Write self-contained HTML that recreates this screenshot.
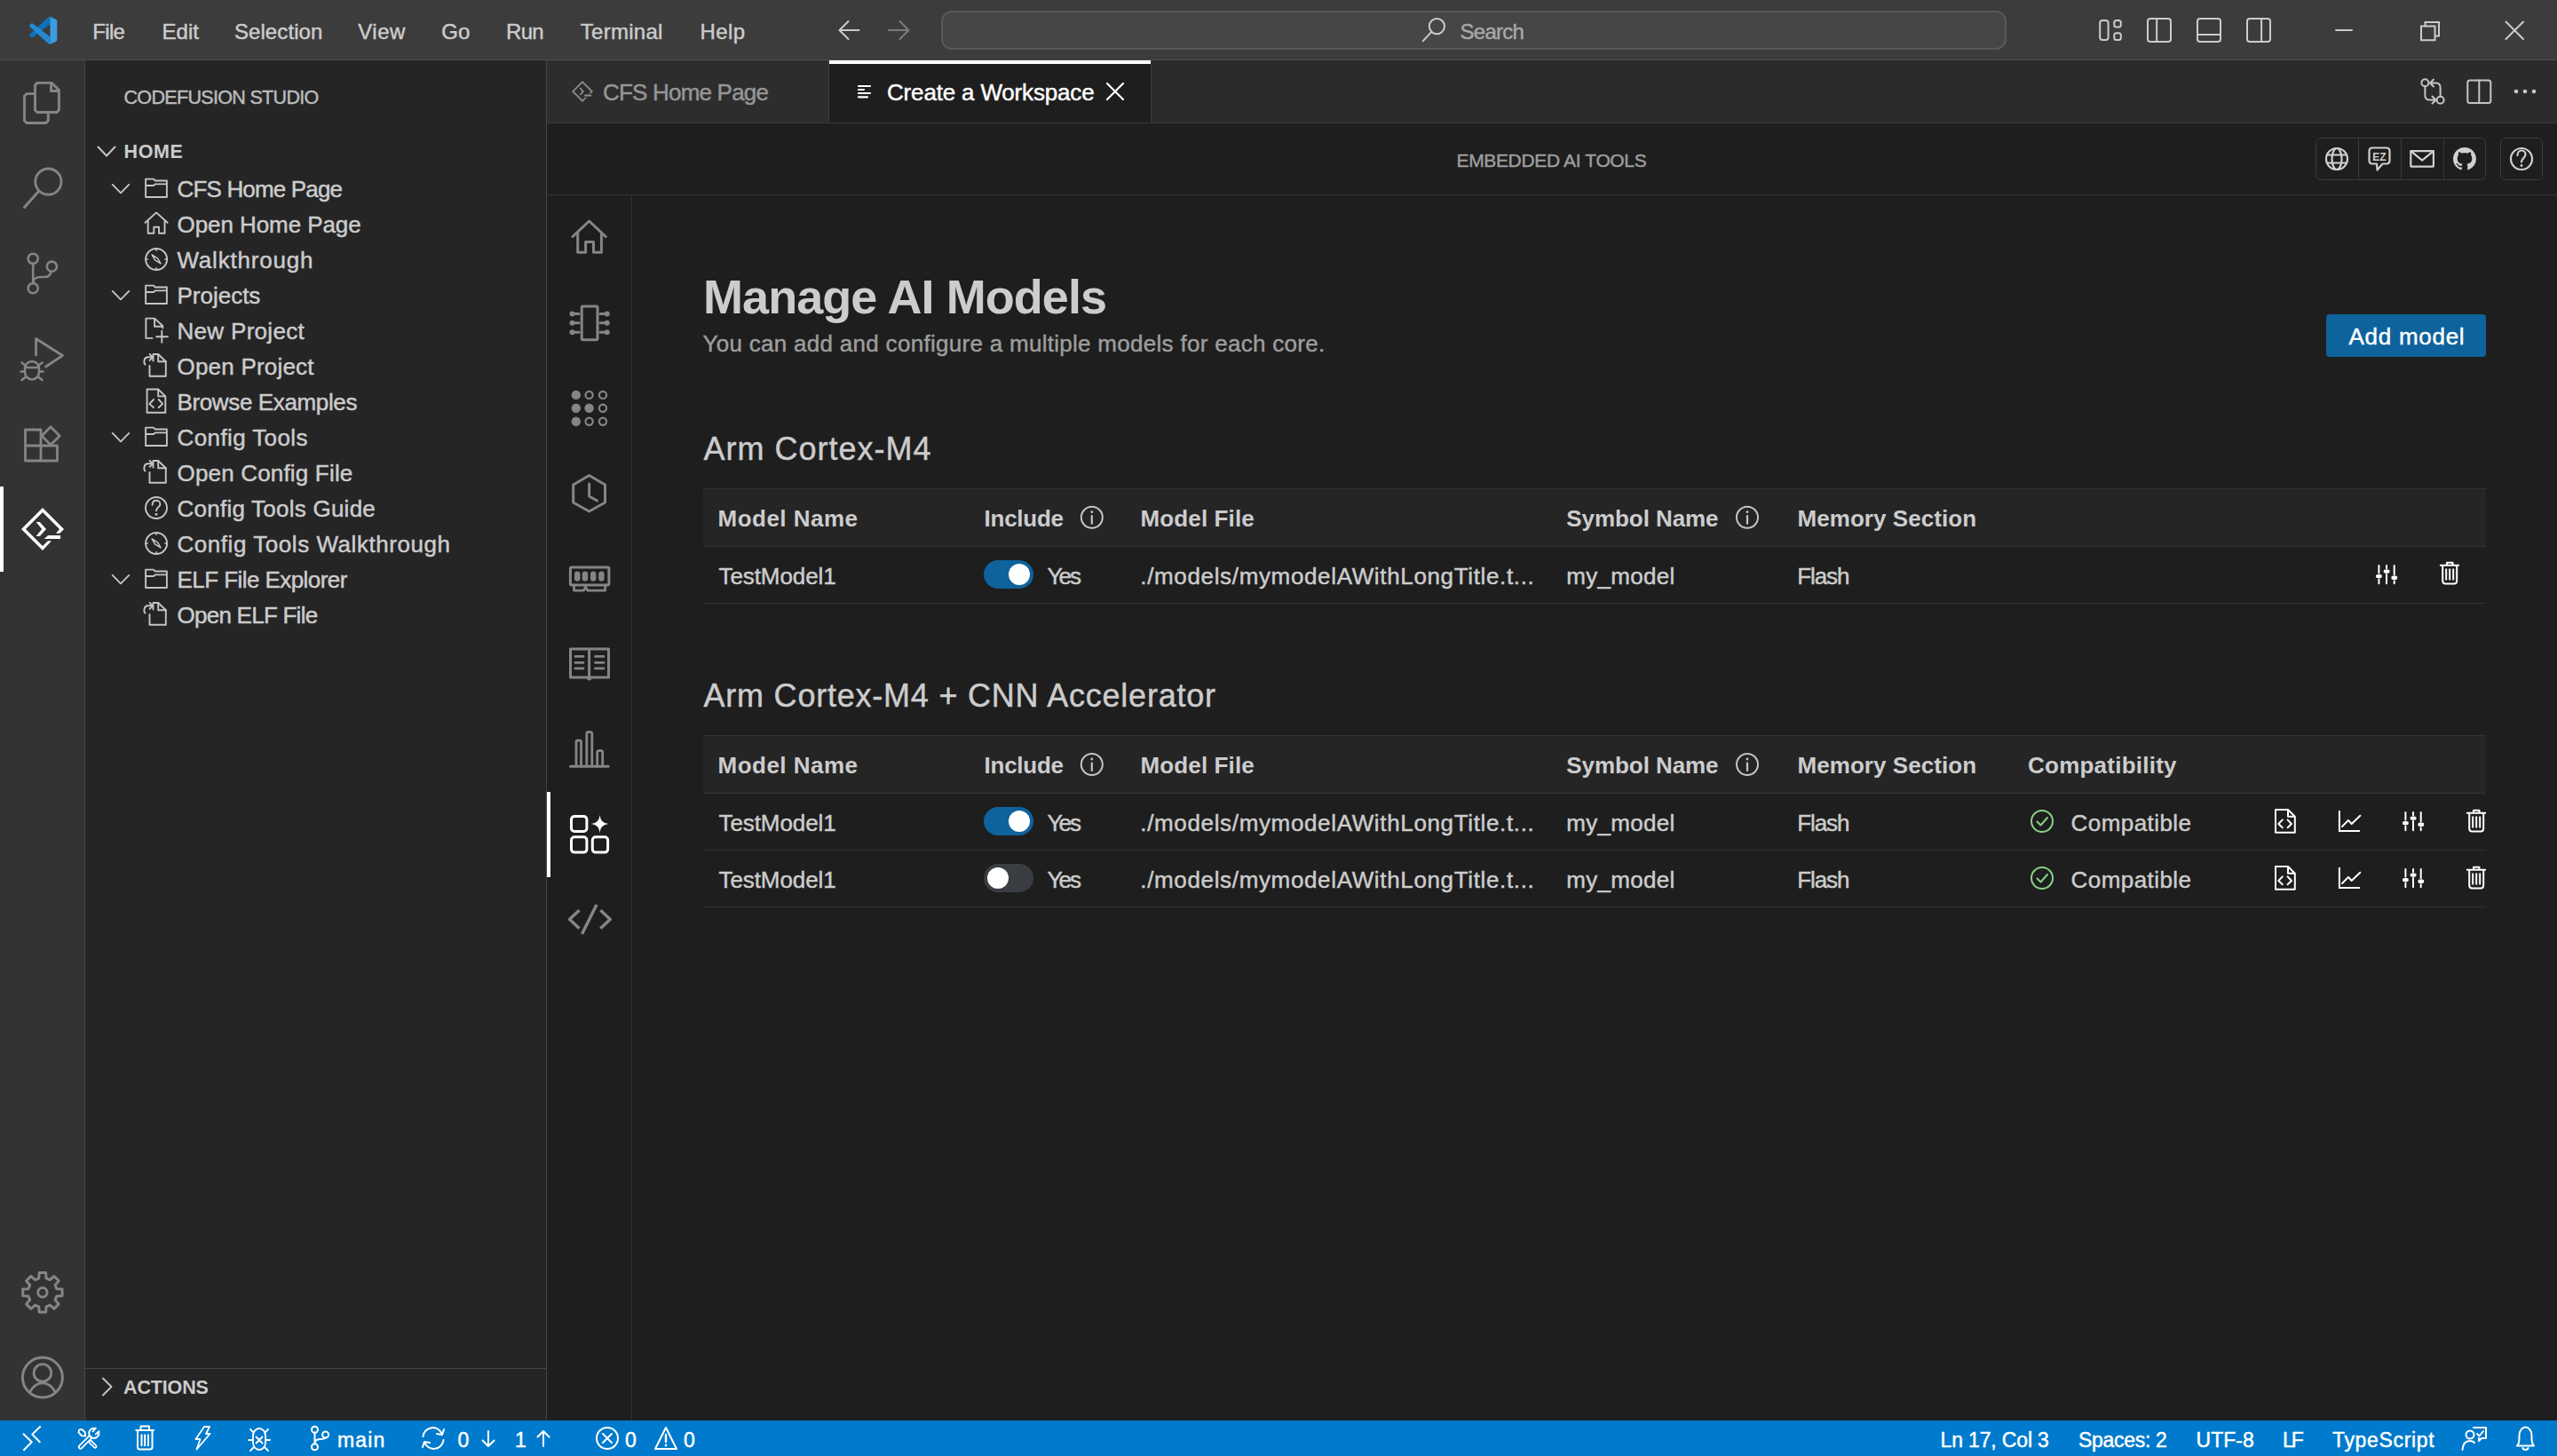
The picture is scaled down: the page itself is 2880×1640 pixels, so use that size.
<!DOCTYPE html>
<html><head><meta charset="utf-8"><title>Manage AI Models</title>
<style>
html,body{margin:0;padding:0;width:2880px;height:1640px;overflow:hidden;background:#1e1e1e;}
body{position:relative;font-family:"Liberation Sans", sans-serif;}
.t{position:absolute;white-space:pre;line-height:1;-webkit-text-stroke:0.45px currentColor;}
svg.ov{position:absolute;left:0;top:0;}
</style></head><body>
<div style="position:absolute;left:0px;top:0px;width:2880px;height:67px;background:#3c3c3c;"></div>
<div style="position:absolute;left:0px;top:67px;width:2880px;height:1px;background:#4e4e4e;"></div>
<div style="position:absolute;left:0px;top:68px;width:95px;height:1532px;background:#333333;"></div>
<div style="position:absolute;left:95px;top:68px;width:1px;height:1532px;background:#474747;"></div>
<div style="position:absolute;left:96px;top:68px;width:519px;height:1532px;background:#252526;"></div>
<div style="position:absolute;left:615px;top:68px;width:1px;height:1532px;background:#444444;"></div>
<div style="position:absolute;left:616px;top:68px;width:2264px;height:70px;background:#2b2b2b;"></div>
<div style="position:absolute;left:616px;top:68px;width:317px;height:70px;background:#2d2d2d;"></div>
<div style="position:absolute;left:933px;top:68px;width:1px;height:70px;background:#3a3a3a;"></div>
<div style="position:absolute;left:934px;top:68px;width:362px;height:70px;background:#1e1e1e;"></div>
<div style="position:absolute;left:934px;top:68px;width:362px;height:4px;background:#ffffff;"></div>
<div style="position:absolute;left:1296px;top:68px;width:1px;height:70px;background:#3a3a3a;"></div>
<div style="position:absolute;left:616px;top:138px;width:2264px;height:1px;background:#3a3a3a;"></div>
<div style="position:absolute;left:616px;top:139px;width:2264px;height:1461px;background:#1e1e1e;"></div>
<div style="position:absolute;left:616px;top:219px;width:2264px;height:1px;background:#333333;"></div>
<div style="position:absolute;left:711px;top:220px;width:1px;height:1380px;background:#333333;"></div>
<div style="position:absolute;left:0px;top:1600px;width:2880px;height:40px;background:#007acc;"></div>
<div style="position:absolute;left:0px;top:548px;width:4px;height:96px;background:#ffffff;"></div>
<div style="position:absolute;left:616px;top:892px;width:4px;height:96px;background:#ffffff;"></div>
<div class="t" style="left:104.3px;top:23.7px;font-size:24px;color:#cccccc;font-weight:400;letter-spacing:-0.68px;">File</div>
<div class="t" style="left:182.5px;top:23.7px;font-size:24px;color:#cccccc;font-weight:400;letter-spacing:0.03px;">Edit</div>
<div class="t" style="left:263.9px;top:23.7px;font-size:24px;color:#cccccc;font-weight:400;letter-spacing:0.09px;">Selection</div>
<div class="t" style="left:403.2px;top:23.7px;font-size:24px;color:#cccccc;font-weight:400;letter-spacing:0.52px;">View</div>
<div class="t" style="left:497.3px;top:23.7px;font-size:24px;color:#cccccc;font-weight:400;letter-spacing:-0.08px;">Go</div>
<div class="t" style="left:570.0px;top:23.7px;font-size:24px;color:#cccccc;font-weight:400;letter-spacing:-0.70px;">Run</div>
<div class="t" style="left:653.8px;top:23.7px;font-size:24px;color:#cccccc;font-weight:400;letter-spacing:0.28px;">Terminal</div>
<div class="t" style="left:788.4px;top:23.7px;font-size:24px;color:#cccccc;font-weight:400;letter-spacing:0.46px;">Help</div>
<div style="position:absolute;left:1060px;top:12px;width:1200px;height:44px;background:#464646;border:2px solid #585858;box-sizing:border-box;border-radius:12px;"></div>
<div class="t" style="left:1644.5px;top:23.7px;font-size:24px;color:#a8a8a8;font-weight:400;letter-spacing:-0.72px;">Search</div>
<div class="t" style="left:139.5px;top:99.8px;font-size:21.5px;color:#bbbbbb;font-weight:400;letter-spacing:-0.67px;">CODEFUSION STUDIO</div>
<div class="t" style="left:139.5px;top:160.8px;font-size:21.5px;color:#cccccc;font-weight:700;letter-spacing:0.60px;-webkit-text-stroke:0;">HOME</div>
<div class="t" style="left:199.5px;top:199.5px;font-size:26px;color:#cccccc;font-weight:400;letter-spacing:-0.83px;">CFS Home Page</div>
<div class="t" style="left:199.5px;top:239.5px;font-size:26px;color:#cccccc;font-weight:400;letter-spacing:-0.07px;">Open Home Page</div>
<div class="t" style="left:199.5px;top:279.5px;font-size:26px;color:#cccccc;font-weight:400;letter-spacing:0.79px;">Walkthrough</div>
<div class="t" style="left:199.5px;top:319.5px;font-size:26px;color:#cccccc;font-weight:400;letter-spacing:-0.01px;">Projects</div>
<div class="t" style="left:199.5px;top:359.5px;font-size:26px;color:#cccccc;font-weight:400;letter-spacing:0.31px;">New Project</div>
<div class="t" style="left:199.5px;top:399.5px;font-size:26px;color:#cccccc;font-weight:400;letter-spacing:0.21px;">Open Project</div>
<div class="t" style="left:199.5px;top:439.5px;font-size:26px;color:#cccccc;font-weight:400;letter-spacing:-0.37px;">Browse Examples</div>
<div class="t" style="left:199.5px;top:479.5px;font-size:26px;color:#cccccc;font-weight:400;letter-spacing:0.40px;">Config Tools</div>
<div class="t" style="left:199.5px;top:519.5px;font-size:26px;color:#cccccc;font-weight:400;letter-spacing:0.18px;">Open Config File</div>
<div class="t" style="left:199.5px;top:559.5px;font-size:26px;color:#cccccc;font-weight:400;letter-spacing:0.24px;">Config Tools Guide</div>
<div class="t" style="left:199.5px;top:599.5px;font-size:26px;color:#cccccc;font-weight:400;letter-spacing:0.55px;">Config Tools Walkthrough</div>
<div class="t" style="left:199.5px;top:639.5px;font-size:26px;color:#cccccc;font-weight:400;letter-spacing:-0.56px;">ELF File Explorer</div>
<div class="t" style="left:199.5px;top:679.5px;font-size:26px;color:#cccccc;font-weight:400;letter-spacing:-0.75px;">Open ELF File</div>
<div style="position:absolute;left:96px;top:1541px;width:519px;height:1px;background:#444444;"></div>
<div class="t" style="left:139px;top:1552.8px;font-size:21.5px;color:#cccccc;font-weight:700;letter-spacing:-0.14px;-webkit-text-stroke:0;">ACTIONS</div>
<div class="t" style="left:679px;top:91.0px;font-size:26px;color:#969696;font-weight:400;letter-spacing:-0.80px;">CFS Home Page</div>
<div class="t" style="left:999px;top:91.0px;font-size:26px;color:#ffffff;font-weight:400;letter-spacing:-0.17px;">Create a Workspace</div>
<div class="t" style="left:1640.5px;top:170.2px;font-size:21px;color:#9d9d9d;font-weight:400;letter-spacing:-0.35px;">EMBEDDED AI TOOLS</div>
<div style="position:absolute;left:2608px;top:155px;width:192px;height:48px;background:transparent;border:1.5px solid #3a3a3a;border-radius:6px;box-sizing:border-box;"></div>
<div style="position:absolute;left:2656px;top:156px;width:1px;height:46px;background:#3a3a3a;"></div>
<div style="position:absolute;left:2704px;top:156px;width:1px;height:46px;background:#3a3a3a;"></div>
<div style="position:absolute;left:2752px;top:156px;width:1px;height:46px;background:#3a3a3a;"></div>
<div style="position:absolute;left:2816px;top:155px;width:48px;height:48px;background:transparent;border:1.5px solid #3a3a3a;border-radius:6px;box-sizing:border-box;"></div>
<div class="t" style="left:792px;top:306.8px;font-size:54px;color:#cccccc;font-weight:700;letter-spacing:-0.94px;-webkit-text-stroke:0;">Manage AI Models</div>
<div class="t" style="left:791.5px;top:374.0px;font-size:26px;color:#9d9d9d;font-weight:400;letter-spacing:0.29px;">You can add and configure a multiple models for each core.</div>
<div style="position:absolute;left:2620px;top:354px;width:180px;height:48px;background:#0e639c;border-radius:4px;"></div>
<div class="t" style="left:2645.5px;top:366.0px;font-size:26px;color:#ffffff;font-weight:400;letter-spacing:0.73px;">Add model</div>
<div class="t" style="left:792.5px;top:487.5px;font-size:36px;color:#cccccc;font-weight:400;letter-spacing:0.99px;">Arm Cortex-M4</div>
<div style="position:absolute;left:792px;top:550px;width:2008px;height:1px;background:#333333;"></div>
<div style="position:absolute;left:792px;top:551px;width:2008px;height:64px;background:#252526;"></div>
<div style="position:absolute;left:792px;top:615px;width:2008px;height:1px;background:#333333;"></div>
<div class="t" style="left:808.5px;top:571.0px;font-size:26px;color:#cccccc;font-weight:700;letter-spacing:0.49px;-webkit-text-stroke:0;">Model Name</div>
<div class="t" style="left:1108.5px;top:571.0px;font-size:26px;color:#cccccc;font-weight:700;letter-spacing:-0.24px;-webkit-text-stroke:0;">Include</div>
<div class="t" style="left:1284.5px;top:571.0px;font-size:26px;color:#cccccc;font-weight:700;letter-spacing:0.13px;-webkit-text-stroke:0;">Model File</div>
<div class="t" style="left:1764.3px;top:571.0px;font-size:26px;color:#cccccc;font-weight:700;letter-spacing:-0.07px;-webkit-text-stroke:0;">Symbol Name</div>
<div class="t" style="left:2024.5px;top:571.0px;font-size:26px;color:#cccccc;font-weight:700;letter-spacing:0.06px;-webkit-text-stroke:0;">Memory Section</div>
<div style="position:absolute;left:792px;top:679px;width:2008px;height:1px;background:#333333;"></div>
<div class="t" style="left:809.5px;top:635.5px;font-size:26px;color:#cccccc;font-weight:400;letter-spacing:-0.08px;">TestModel1</div>
<div class="t" style="left:1179.5px;top:635.5px;font-size:26px;color:#cccccc;font-weight:400;letter-spacing:-1.93px;">Yes</div>
<div class="t" style="left:1284.3px;top:635.5px;font-size:26px;color:#cccccc;font-weight:400;letter-spacing:0.65px;">./models/mymodelAWithLongTitle.t...</div>
<div class="t" style="left:1764.3px;top:635.5px;font-size:26px;color:#cccccc;font-weight:400;letter-spacing:0.29px;">my_model</div>
<div class="t" style="left:2024.3px;top:635.5px;font-size:26px;color:#cccccc;font-weight:400;letter-spacing:-1.10px;">Flash</div>
<div style="position:absolute;left:1108px;top:631px;width:56px;height:32px;background:#0e639c;border-radius:16px;"></div>
<div style="position:absolute;left:1136px;top:635px;width:24px;height:24px;background:#ffffff;border-radius:50%;"></div>
<div class="t" style="left:792.5px;top:765.8px;font-size:36px;color:#cccccc;font-weight:400;letter-spacing:0.78px;">Arm Cortex-M4 + CNN Accelerator</div>
<div style="position:absolute;left:792px;top:828px;width:2008px;height:1px;background:#333333;"></div>
<div style="position:absolute;left:792px;top:829px;width:2008px;height:64px;background:#252526;"></div>
<div style="position:absolute;left:792px;top:893px;width:2008px;height:1px;background:#333333;"></div>
<div class="t" style="left:808.5px;top:849.0px;font-size:26px;color:#cccccc;font-weight:700;letter-spacing:0.49px;-webkit-text-stroke:0;">Model Name</div>
<div class="t" style="left:1108.5px;top:849.0px;font-size:26px;color:#cccccc;font-weight:700;letter-spacing:-0.24px;-webkit-text-stroke:0;">Include</div>
<div class="t" style="left:1284.5px;top:849.0px;font-size:26px;color:#cccccc;font-weight:700;letter-spacing:0.13px;-webkit-text-stroke:0;">Model File</div>
<div class="t" style="left:1764.3px;top:849.0px;font-size:26px;color:#cccccc;font-weight:700;letter-spacing:-0.07px;-webkit-text-stroke:0;">Symbol Name</div>
<div class="t" style="left:2024.5px;top:849.0px;font-size:26px;color:#cccccc;font-weight:700;letter-spacing:0.06px;-webkit-text-stroke:0;">Memory Section</div>
<div class="t" style="left:2284px;top:849.0px;font-size:26px;color:#cccccc;font-weight:700;letter-spacing:0.24px;-webkit-text-stroke:0;">Compatibility</div>
<div style="position:absolute;left:792px;top:957px;width:2008px;height:1px;background:#333333;"></div>
<div class="t" style="left:809.5px;top:913.5px;font-size:26px;color:#cccccc;font-weight:400;letter-spacing:-0.08px;">TestModel1</div>
<div class="t" style="left:1179.5px;top:913.5px;font-size:26px;color:#cccccc;font-weight:400;letter-spacing:-1.93px;">Yes</div>
<div class="t" style="left:1284.3px;top:913.5px;font-size:26px;color:#cccccc;font-weight:400;letter-spacing:0.65px;">./models/mymodelAWithLongTitle.t...</div>
<div class="t" style="left:1764.3px;top:913.5px;font-size:26px;color:#cccccc;font-weight:400;letter-spacing:0.29px;">my_model</div>
<div class="t" style="left:2024.3px;top:913.5px;font-size:26px;color:#cccccc;font-weight:400;letter-spacing:-1.10px;">Flash</div>
<div class="t" style="left:2332.5px;top:913.5px;font-size:26px;color:#cccccc;font-weight:400;letter-spacing:0.45px;">Compatible</div>
<div style="position:absolute;left:1108px;top:909px;width:56px;height:32px;background:#0e639c;border-radius:16px;"></div>
<div style="position:absolute;left:1136px;top:913px;width:24px;height:24px;background:#ffffff;border-radius:50%;"></div>
<div style="position:absolute;left:792px;top:1021px;width:2008px;height:1px;background:#333333;"></div>
<div class="t" style="left:809.5px;top:977.5px;font-size:26px;color:#cccccc;font-weight:400;letter-spacing:-0.08px;">TestModel1</div>
<div class="t" style="left:1179.5px;top:977.5px;font-size:26px;color:#cccccc;font-weight:400;letter-spacing:-1.93px;">Yes</div>
<div class="t" style="left:1284.3px;top:977.5px;font-size:26px;color:#cccccc;font-weight:400;letter-spacing:0.65px;">./models/mymodelAWithLongTitle.t...</div>
<div class="t" style="left:1764.3px;top:977.5px;font-size:26px;color:#cccccc;font-weight:400;letter-spacing:0.29px;">my_model</div>
<div class="t" style="left:2024.3px;top:977.5px;font-size:26px;color:#cccccc;font-weight:400;letter-spacing:-1.10px;">Flash</div>
<div class="t" style="left:2332.5px;top:977.5px;font-size:26px;color:#cccccc;font-weight:400;letter-spacing:0.45px;">Compatible</div>
<div style="position:absolute;left:1108px;top:973px;width:56px;height:32px;background:#3a3d41;border-radius:16px;"></div>
<div style="position:absolute;left:1112px;top:977px;width:24px;height:24px;background:#ffffff;border-radius:50%;"></div>
<div class="t" style="left:380px;top:1610.5px;font-size:23px;color:#ffffff;font-weight:400;letter-spacing:1.17px;">main</div>
<div class="t" style="left:515.5px;top:1610.5px;font-size:23px;color:#ffffff;font-weight:400;letter-spacing:0.00px;">0</div>
<div class="t" style="left:580px;top:1610.5px;font-size:23px;color:#ffffff;font-weight:400;letter-spacing:0.00px;">1</div>
<div class="t" style="left:704px;top:1610.5px;font-size:23px;color:#ffffff;font-weight:400;letter-spacing:0.00px;">0</div>
<div class="t" style="left:770px;top:1610.5px;font-size:23px;color:#ffffff;font-weight:400;letter-spacing:0.00px;">0</div>
<div class="t" style="left:2185.5px;top:1610.5px;font-size:23px;color:#ffffff;font-weight:400;letter-spacing:-0.15px;">Ln 17, Col 3</div>
<div class="t" style="left:2341px;top:1610.5px;font-size:23px;color:#ffffff;font-weight:400;letter-spacing:-0.30px;">Spaces: 2</div>
<div class="t" style="left:2473.5px;top:1610.5px;font-size:23px;color:#ffffff;font-weight:400;letter-spacing:0.05px;">UTF-8</div>
<div class="t" style="left:2571px;top:1610.5px;font-size:23px;color:#ffffff;font-weight:400;letter-spacing:-3.06px;">LF</div>
<div class="t" style="left:2627px;top:1610.5px;font-size:23px;color:#ffffff;font-weight:400;letter-spacing:0.66px;">TypeScript</div>
<svg class="ov" width="2880" height="1640" viewBox="0 0 2880 1640" fill="none" stroke-linecap="round" stroke-linejoin="round">
<g transform="translate(33,18.7) scale(0.313)"><path d="M68.77,2.08 L69.5,1.45 L75,0.5 L75,27.3 L45.11,50 L29.36,61.96 L12.19,74.99 C10.6,76.2 8.35,76.1 6.87,74.75 L1.36,69.75 C-0.45,68.1 -0.45,65.24 1.36,63.58 L16.25,50 L29.36,38.04 Z" fill="#0e72ba"/><path d="M12.19,25.01 C10.6,23.8 8.35,23.9 6.87,25.25 L1.36,30.25 C-0.45,31.9 -0.45,34.76 1.36,36.42 L16.25,50 L29.36,61.96 L68.77,97.92 C69.4,98.54 70.12,99.01 70.91,99.32 L75,99.5 L75,72.7 L45.11,50 L29.36,38.04 Z" fill="#248ad2"/><path d="M75,0.2 L96.46,10.78 C98.62,11.82 100,14.01 100,16.41 V83.59 C100,85.99 98.62,88.18 96.46,89.22 L75.87,99.13 C75.5,99.3 75.2,99.45 75,99.5 Z" fill="#3b9de0"/></g>
<path d="M945.5,34 H967.5 M945.5,34 L955.5,24 M945.5,34 L955.5,44" stroke="#cccccc" stroke-width="2" />
<path d="M1001,34 H1023.5 M1023.5,34 L1013.5,24 M1023.5,34 L1013.5,44" stroke="#7a7a7a" stroke-width="2" />
<circle cx="1618.4" cy="29.6" r="8.6" stroke="#cccccc" stroke-width="2"/>
<path d="M1612.3,35.8 L1602.8,46.2" stroke="#cccccc" stroke-width="2" />
<rect x="2365.2" y="23" width="9.4" height="22" rx="3" stroke="#cccccc" stroke-width="2"/>
<rect x="2381.3" y="23" width="7.5" height="7.5" rx="2.5" stroke="#cccccc" stroke-width="2"/>
<rect x="2381.3" y="37.2" width="7.5" height="7.8" rx="2.5" stroke="#cccccc" stroke-width="2"/>
<rect x="2419" y="21" width="26" height="26" rx="3" stroke="#cccccc" stroke-width="2"/>
<path d="M2429.2,21 V47" stroke="#cccccc" stroke-width="2" />
<rect x="2475" y="21" width="26" height="26" rx="3" stroke="#cccccc" stroke-width="2"/>
<path d="M2475,39 H2501" stroke="#cccccc" stroke-width="2" />
<rect x="2531" y="21" width="26" height="26" rx="3" stroke="#cccccc" stroke-width="2"/>
<path d="M2547.1,21 V47" stroke="#cccccc" stroke-width="2" />
<path d="M2631,34 H2649" stroke="#cccccc" stroke-width="2" />
<path d="M2727,29.6 H2742.5 V45.2 H2727 Z M2731.5,29.6 V25 H2747 V40.5 H2742.5" stroke="#cccccc" stroke-width="2" stroke-linejoin="miter" stroke-linecap="butt"/>
<path d="M2822.5,24.5 L2842,44 M2842,24.5 L2822.5,44" stroke="#cccccc" stroke-width="2" />
<path d="M39.5,105.6 H30 L27.5,108.1 V136 L30,138.5 H51.8 L54.3,136 V126.5" stroke="#858585" stroke-width="2.9" stroke-linejoin="miter"/>
<path d="M39.5,96 L42,93.4 H58.3 L66.4,101.4 V124 L63.9,126.5 H42 L39.5,124 Z M57.6,93.4 V102.5 H66.4" stroke="#858585" stroke-width="2.9" stroke-linejoin="miter"/>
<circle cx="54.4" cy="204.6" r="14.6" stroke="#858585" stroke-width="2.8"/>
<path d="M43.5,215.5 L27.5,233.5" stroke="#858585" stroke-width="3" />
<circle cx="37.2" cy="291.3" r="5.6" stroke="#858585" stroke-width="2.6"/>
<circle cx="37.2" cy="324.7" r="5.6" stroke="#858585" stroke-width="2.6"/>
<circle cx="58.4" cy="300.2" r="5.6" stroke="#858585" stroke-width="2.6"/>
<path d="M37.2,297 V319 M37.5,318 C38,313 41,312 46,312 H51 C55,312 57,309 57.5,305.5" stroke="#858585" stroke-width="2.6" />
<path d="M40.6,400 V381.5 L70.5,400.5 L51.5,413" stroke="#858585" stroke-width="2.8" />
<path d="M28,415 A8,8 0 0 1 44,415 V419 A8,8.5 0 0 1 28,419 Z M28,414 H44 M23.5,418.5 H28 M44,418.5 H48.5 M24.5,408.5 L29,412 M47.5,408.5 L43,412 M24.5,428 L29,424.5 M47.5,428 L43,424.5" stroke="#858585" stroke-width="2.6" />
<path d="M28.5,484 H46 V519 H28.5 Z M28.5,502 H64.5 V519 H46 M46,502" stroke="#858585" stroke-width="2.8" />
<path d="M57.1,480.8 L67.2,490.9 L57.1,501 L47,490.9 Z" stroke="#858585" stroke-width="2.8" />
<path transform="translate(16,564)" d="M51.4,36.7 L56,32 L32,8 L8,32 L32,56 L42,45.3 L38,45.3 L32,51 L13,32 L32,13 L51,32 L47,36.7 Z M24.6,24 L28.8,24 L36,32 L28.8,40 L24.6,40 L31.2,32 Z M33.8,42.9 L38.2,39.1 L52.1,39.1 L52.1,42.9 Z" fill="#ffffff"/>
<path d="M63.87,1451.67 L70.09,1452.09 L70.09,1459.51 L63.87,1459.93 L62.12,1464.17 L66.22,1468.87 L60.97,1474.12 L56.27,1470.02 L52.03,1471.77 L51.61,1477.99 L44.19,1477.99 L43.77,1471.77 L39.53,1470.02 L34.83,1474.12 L29.58,1468.87 L33.68,1464.17 L31.93,1459.93 L25.71,1459.51 L25.71,1452.09 L31.93,1451.67 L33.68,1447.43 L29.58,1442.73 L34.83,1437.48 L39.53,1441.58 L43.77,1439.83 L44.19,1433.61 L51.61,1433.61 L52.03,1439.83 L56.27,1441.58 L60.97,1437.48 L66.22,1442.73 L62.12,1447.43 Z" stroke="#858585" stroke-width="3" />
<circle cx="47.9" cy="1455.8" r="5.2" stroke="#858585" stroke-width="3"/>
<circle cx="47.9" cy="1551.6" r="22.5" stroke="#858585" stroke-width="3"/>
<circle cx="47.9" cy="1546.4" r="9.8" stroke="#858585" stroke-width="2.8"/>
<path d="M33.8,1567.5 C37.5,1561 42.5,1557.9 47.9,1557.9 C53.3,1557.9 58.3,1561 62,1567.5" stroke="#858585" stroke-width="2.8" />
<path d="M110.5,165.5 L120,175.5 L129.5,165.5" stroke="#c5c5c5" stroke-width="2" />
<path d="M116,1552.5 L125.5,1562 L116,1571.5" stroke="#c5c5c5" stroke-width="1.9" />
<path d="M126.7,207.9 L136,217.3 L145.3,207.9" stroke="#c5c5c5" stroke-width="1.9" />
<path d="M164.1,222 V201.6 H172.9 L174.8,203.5 H187.9 V222 Z M164.1,209 H172.9 L174.8,207.4 H187.9" stroke="#c5c5c5" stroke-width="1.9" />
<path d="M163.6,250.8 L176.1,239.4 L188.6,250.8 M166.7,248 V262.7 H173.3 V255.8 H179 V262.7 H185.5 V248" stroke="#c5c5c5" stroke-width="1.9" />
<circle cx="176.1" cy="292" r="12" stroke="#c5c5c5" stroke-width="1.9"/>
<path d="M171.1,287 L177.6,291.1 L181,296.9 L174.5,292.9 Z" stroke="#c5c5c5" stroke-width="1.5" />
<path d="M176.1,280 V282.2 M176.1,304 V301.8 M164.1,292 H166.3 M188.1,292 H185.9" stroke="#c5c5c5" stroke-width="1.5" />
<path d="M126.7,327.9 L136,337.3 L145.3,327.9" stroke="#c5c5c5" stroke-width="1.9" />
<path d="M164.1,342 V321.6 H172.9 L174.8,323.5 H187.9 V342 Z M164.1,329 H172.9 L174.8,327.4 H187.9" stroke="#c5c5c5" stroke-width="1.9" />
<path d="M171.6,380.9 H164.4 V358.6 H174.1 L183.2,367 V369.5 M174.1,358.6 V367.7 H183.2" stroke="#c5c5c5" stroke-width="1.9" />
<path d="M176.1,379.2 H188.9 M182.3,372.6 V385.8" stroke="#c5c5c5" stroke-width="1.9" />
<path d="M172.5,406.5 V399 H178.2 L186.8,407.2 V423.7 H168.5 V412" stroke="#c5c5c5" stroke-width="1.9" />
<path d="M178.2,399 V407.2 H186.8" stroke="#c5c5c5" stroke-width="1.9" />
<path d="M163.4,410.5 C161.5,408.5 162,402.3 166.5,402.3 H172 M168.6,398.8 L172.1,402.3 L168.6,405.8" stroke="#c5c5c5" stroke-width="1.9" />
<path d="M165.6,464.8 V438.5 H178.2 L186.3,446.4 V464.8 Z M178.2,438.5 V446.4 H186.3" stroke="#c5c5c5" stroke-width="1.9" />
<path d="M173,450 L168.3,454.9 L173,459 M178.7,450 L183.2,454.9 L178.7,459" stroke="#c5c5c5" stroke-width="1.9" />
<path d="M126.7,487.9 L136,497.3 L145.3,487.9" stroke="#c5c5c5" stroke-width="1.9" />
<path d="M164.1,502 V481.6 H172.9 L174.8,483.5 H187.9 V502 Z M164.1,489 H172.9 L174.8,487.4 H187.9" stroke="#c5c5c5" stroke-width="1.9" />
<path d="M172.5,526.5 V519 H178.2 L186.8,527.2 V543.7 H168.5 V532" stroke="#c5c5c5" stroke-width="1.9" />
<path d="M178.2,519 V527.2 H186.8" stroke="#c5c5c5" stroke-width="1.9" />
<path d="M163.4,530.5 C161.5,528.5 162,522.3 166.5,522.3 H172 M168.6,518.8 L172.1,522.3 L168.6,525.8" stroke="#c5c5c5" stroke-width="1.9" />
<circle cx="176" cy="572" r="12" stroke="#c5c5c5" stroke-width="1.9"/>
<path d="M171.6,568.8 C171.6,565 174,563.8 176,563.8 C178.5,563.8 180.4,565.6 180.4,568 C180.4,571 176,571.5 176,575.2" stroke="#c5c5c5" stroke-width="1.9" />
<circle cx="176" cy="579.3" r="1.4" fill="#c5c5c5" stroke="none"/>
<circle cx="176.1" cy="612" r="12" stroke="#c5c5c5" stroke-width="1.9"/>
<path d="M171.1,607 L177.6,611.1 L181,616.9 L174.5,612.9 Z" stroke="#c5c5c5" stroke-width="1.5" />
<path d="M176.1,600 V602.2 M176.1,624 V621.8 M164.1,612 H166.3 M188.1,612 H185.9" stroke="#c5c5c5" stroke-width="1.5" />
<path d="M126.7,647.9 L136,657.3 L145.3,647.9" stroke="#c5c5c5" stroke-width="1.9" />
<path d="M164.1,662 V641.6 H172.9 L174.8,643.5 H187.9 V662 Z M164.1,649 H172.9 L174.8,647.4 H187.9" stroke="#c5c5c5" stroke-width="1.9" />
<path d="M172.5,686.5 V679 H178.2 L186.8,687.2 V703.7 H168.5 V692" stroke="#c5c5c5" stroke-width="1.9" />
<path d="M178.2,679 V687.2 H186.8" stroke="#c5c5c5" stroke-width="1.9" />
<path d="M163.4,690.5 C161.5,688.5 162,682.3 166.5,682.3 H172 M168.6,678.8 L172.1,682.3 L168.6,685.8" stroke="#c5c5c5" stroke-width="1.9" />
<path transform="translate(640,87) scale(0.5)" d="M51.4,36.7 L56,32 L32,8 L8,32 L32,56 L42,45.3 L38,45.3 L32,51 L13,32 L32,13 L51,32 L47,36.7 Z M24.6,24 L28.8,24 L36,32 L28.8,40 L24.6,40 L31.2,32 Z M33.8,42.9 L38.2,39.1 L52.1,39.1 L52.1,42.9 Z" fill="#8f8f8f"/>
<path d="M967,97 H980 M967,101 H973 M967,105 H980 M967,109.3 H977" stroke="#ffffff" stroke-width="2.2" />
<path d="M1247,94 L1265,112 M1265,94 L1247,112" stroke="#ffffff" stroke-width="2.2" />
<circle cx="2731.4" cy="93.2" r="4" stroke="#c5c5c5" stroke-width="2"/>
<circle cx="2748.6" cy="112.8" r="4" stroke="#c5c5c5" stroke-width="2"/>
<path d="M2731.4,97.2 V107 C2731.4,110 2733,112.5 2736,112.5 H2743 M2739.5,108.5 L2743.5,112.5 L2739.5,116.5" stroke="#c5c5c5" stroke-width="2" />
<path d="M2748.6,108.8 V99 C2748.6,96 2747,93.5 2744,93.5 H2738 M2741,89.5 L2737,93.5 L2741,97.5" stroke="#c5c5c5" stroke-width="2" />
<rect x="2779.3" y="90.5" width="26" height="25.5" rx="2.5" stroke="#c5c5c5" stroke-width="2"/>
<path d="M2792.3,90.5 V116" stroke="#c5c5c5" stroke-width="2" />
<circle cx="2834" cy="103" r="2.3" fill="#c5c5c5" stroke="none"/>
<circle cx="2844" cy="103" r="2.3" fill="#c5c5c5" stroke="none"/>
<circle cx="2854" cy="103" r="2.3" fill="#c5c5c5" stroke="none"/>
<circle cx="2632" cy="179" r="12" stroke="#d0d0d0" stroke-width="2.2"/>
<ellipse cx="2632" cy="179" rx="5.5" ry="12" stroke="#d0d0d0" stroke-width="2.2"/>
<path d="M2621,174.5 H2643 M2621,183.5 H2643" stroke="#d0d0d0" stroke-width="2.2" />
<path d="M2672,166.5 H2688 C2690.5,166.5 2691.5,168 2691.5,170.5 V180.5 C2691.5,183 2690,184.5 2688,184.5 H2683.5 L2677.5,191.5 L2677,184.5 H2672 C2669.5,184.5 2668.5,183 2668.5,180.5 V170.5 C2668.5,168 2670,166.5 2672,166.5 Z" stroke="#d0d0d0" stroke-width="2.2" />
<text x="2680" y="181" font-family="Liberation Sans" font-size="12" font-weight="700" fill="#d0d0d0" stroke="none" text-anchor="middle">EZ</text>
<rect x="2715.3" y="170.1" width="25.6" height="17.5" rx="0.5" stroke="#d0d0d0" stroke-width="2.2"/>
<path d="M2715.3,170.1 L2728.1,180.6 L2740.9,170.1" stroke="#d0d0d0" stroke-width="2.2" />
<g transform="translate(2763,166) scale(1.625)"><path fill="#d0d0d0" d="M8 0C3.58 0 0 3.58 0 8c0 3.54 2.29 6.53 5.47 7.59.4.07.55-.17.55-.38 0-.19-.01-.82-.01-1.49-2.01.37-2.53-.49-2.69-.94-.09-.23-.48-.94-.82-1.13-.28-.15-.68-.52-.01-.53.63-.01 1.08.58 1.23.82.72 1.21 1.87.87 2.33.66.07-.52.28-.87.51-1.07-1.78-.2-3.64-.89-3.64-3.95 0-.87.31-1.59.82-2.15-.08-.2-.36-1.02.08-2.12 0 0 .67-.21 2.2.82.64-.18 1.32-.27 2-.27.68 0 1.36.09 2 .27 1.53-1.04 2.2-.82 2.2-.82.44 1.1.16 1.92.08 2.12.51.56.82 1.27.82 2.15 0 3.07-1.87 3.75-3.65 3.95.29.25.54.73.54 1.48 0 1.07-.01 1.93-.01 2.2 0 .21.15.46.55.38A8.013 8.013 0 0016 8c0-4.42-3.58-8-8-8z"/></g>
<circle cx="2840" cy="179" r="12" stroke="#d0d0d0" stroke-width="2.2"/>
<path d="M2835.5,175 C2835.5,171 2838,169.5 2840,169.5 C2842.5,169.5 2844.5,171.5 2844.5,174 C2844.5,177.5 2840,178.5 2840,182.5" stroke="#d0d0d0" stroke-width="2.2" />
<circle cx="2840" cy="186.5" r="1.4" fill="#d0d0d0" stroke="none"/>
<path d="M645,266.5 L663.6,249 L682.2,266.5 M650.7,262 V284.3 H659.6 V272.4 H668.5 V284.3 H677.4 V262" stroke="#858585" stroke-width="3" />
<rect x="655.2" y="345.1" width="17.8" height="37.6" rx="1.5" stroke="#858585" stroke-width="3"/>
<path d="M646,353.5 H652 M676,353.5 H682" stroke="#858585" stroke-width="3" />
<circle cx="644.5" cy="353.5" r="3" fill="#858585" stroke="none"/>
<circle cx="683.7" cy="353.5" r="3" fill="#858585" stroke="none"/>
<path d="M646,363.8 H652 M676,363.8 H682" stroke="#858585" stroke-width="3" />
<circle cx="644.5" cy="363.8" r="3" fill="#858585" stroke="none"/>
<circle cx="683.7" cy="363.8" r="3" fill="#858585" stroke="none"/>
<path d="M646,374.3 H652 M676,374.3 H682" stroke="#858585" stroke-width="3" />
<circle cx="644.5" cy="374.3" r="3" fill="#858585" stroke="none"/>
<circle cx="683.7" cy="374.3" r="3" fill="#858585" stroke="none"/>
<circle cx="648.8" cy="444.9" r="5.2" fill="#858585" stroke="none"/>
<circle cx="663.6" cy="444.9" r="4.1" stroke="#858585" stroke-width="2.2"/>
<circle cx="679" cy="444.9" r="4.1" stroke="#858585" stroke-width="2.2"/>
<circle cx="648.8" cy="459.7" r="5.2" fill="#858585" stroke="none"/>
<circle cx="663.6" cy="459.7" r="5.2" fill="#858585" stroke="none"/>
<circle cx="679" cy="459.7" r="4.1" stroke="#858585" stroke-width="2.2"/>
<circle cx="648.8" cy="474.7" r="5.2" fill="#858585" stroke="none"/>
<circle cx="663.6" cy="474.7" r="4.1" stroke="#858585" stroke-width="2.2"/>
<circle cx="679" cy="474.7" r="4.1" stroke="#858585" stroke-width="2.2"/>
<path d="M663.6,535.5 L681.5,546 V566 L663.6,576 L645.7,566 V546 Z" stroke="#858585" stroke-width="3" />
<path d="M663.6,545 V559 L672.5,564" stroke="#858585" stroke-width="3" />
<rect x="642.4" y="638.9" width="43.5" height="20" rx="1.5" stroke="#858585" stroke-width="3"/>
<rect x="647.0" y="643.5" width="6.4" height="11.3" rx="3.2" fill="#858585" stroke="none"/>
<rect x="655.8" y="643.5" width="6.4" height="11.3" rx="3.2" fill="#858585" stroke="none"/>
<rect x="665.0" y="643.5" width="6.4" height="11.3" rx="3.2" fill="#858585" stroke="none"/>
<rect x="674.1999999999999" y="643.5" width="6.4" height="11.3" rx="3.2" fill="#858585" stroke="none"/>
<path d="M646.5,659 V665.2 H657.5 L659.5,661 L662,665.2 H681.7 V659" stroke="#858585" stroke-width="2.8" />
<path d="M642.5,731 H663.6 V763 H642.5 Z M663.6,731 H685.5 V763 H663.6" stroke="#858585" stroke-width="3" />
<path d="M648,739.4 H657 M648,746.3 H657 M648,752.9 H657 M670.5,739.4 H680 M670.5,746.3 H680 M670.5,752.9 H680" stroke="#858585" stroke-width="2.8" />
<circle cx="663.6" cy="764" r="2.5" fill="#858585" stroke="none"/>
<path d="M642.6,863.2 H685.1" stroke="#858585" stroke-width="3" />
<path d="M649,863 V835.5 C649,833.5 654.5,833.5 654.5,835.5 V863 M660.8,863 V826 C660.8,824 666.8,824 666.8,826 V863 M672.7,863 V847 C672.7,845 678.7,845 678.7,847 V863" stroke="#858585" stroke-width="2.8" />
<rect x="643.5" y="919.6" width="17.4" height="16.8" rx="3.5" stroke="#ffffff" stroke-width="3"/>
<rect x="643.5" y="942.8" width="17.4" height="17.3" rx="3.5" stroke="#ffffff" stroke-width="3"/>
<rect x="667.3" y="942.8" width="17.3" height="17.3" rx="3.5" stroke="#ffffff" stroke-width="3"/>
<path d="M675.6,918 C676.5,924.5 679,927 685.6,928 C679,929 676.5,931.5 675.6,938 C674.7,931.5 672.2,929 665.6,928 C672.2,927 674.7,924.5 675.6,918 Z" fill="#ffffff" stroke="none" />
<path d="M652.5,1025.3 L641.5,1035.5 L652.5,1045.8 M676.3,1025.3 L687.3,1035.5 L676.3,1045.8 M672,1019 L655.5,1052" stroke="#858585" stroke-width="3.5" stroke-linecap="butt"/>
<circle cx="1229.8" cy="582.7" r="12" stroke="#c5c5c5" stroke-width="2"/>
<path d="M1229.8,581.2 V589.7" stroke="#c5c5c5" stroke-width="2.2" />
<circle cx="1229.8" cy="576.7" r="1.4" fill="#c5c5c5" stroke="none"/>
<circle cx="1968" cy="582.7" r="12" stroke="#c5c5c5" stroke-width="2"/>
<path d="M1968,581.2 V589.7" stroke="#c5c5c5" stroke-width="2.2" />
<circle cx="1968" cy="576.7" r="1.4" fill="#c5c5c5" stroke="none"/>
<circle cx="1229.8" cy="861" r="12" stroke="#c5c5c5" stroke-width="2"/>
<path d="M1229.8,859.5 V868" stroke="#c5c5c5" stroke-width="2.2" />
<circle cx="1229.8" cy="855" r="1.4" fill="#c5c5c5" stroke="none"/>
<circle cx="1968" cy="861" r="12" stroke="#c5c5c5" stroke-width="2"/>
<path d="M1968,859.5 V868" stroke="#c5c5c5" stroke-width="2.2" />
<circle cx="1968" cy="855" r="1.4" fill="#c5c5c5" stroke="none"/>
<path d="M2679.4,637.0 V645.6 M2679.4,652.6 V657.3 M2688.0,637.0 V640.3 M2688.0,647.0 V657.3 M2696.7,637.0 V647.3 M2696.7,654.2 V657.3" stroke="#ffffff" stroke-width="2" />
<rect x="2675.9" y="646.9" width="7" height="4.4" rx="2.2" fill="#ffffff" stroke="none"/>
<rect x="2684.6" y="641.4" width="7" height="4.4" rx="2.2" fill="#ffffff" stroke="none"/>
<rect x="2693.3" y="648.6" width="7" height="4.4" rx="2.2" fill="#ffffff" stroke="none"/>
<path d="M2748.8,636.8 H2769.2 M2756.0,636.8 V633.7 H2762.5 V636.8 M2751.2,637.0 V654 C2751.2,656.5 2752.5,657.5 2754.5,657.5 H2764 C2766.0,657.5 2767.2,656.5 2767.2,654.0 V637" stroke="#ffffff" stroke-width="2" />
<path d="M2755.2,640.5 V653.5 M2759.2,640.5 V653.5 M2763.2,640.5 V653.5" stroke="#ffffff" stroke-width="2" stroke-linecap="butt"/>
<path d="M2563.0,912.0 H2577 L2584.8,919.8 V937.8 H2563 Z M2577.0,912.0 V919.8 H2584.8" stroke="#ffffff" stroke-width="2" />
<path d="M2570.8,923.4 L2566.3,928.0 L2570.8,932.3 M2576.6,923.4 L2581.0,928.0 L2576.6,932.3" stroke="#ffffff" stroke-width="2" />
<path d="M2634.9,913.0 V936.1 H2658" stroke="#ffffff" stroke-width="2" stroke-linecap="butt" stroke-linejoin="miter"/>
<path d="M2638.0,931.0 L2645.0,923.9 L2648.6,928.0 L2658.3,918.8" stroke="#ffffff" stroke-width="2" />
<path d="M2709.4,915.0 V923.6 M2709.4,930.6 V935.3 M2718.0,915.0 V918.3 M2718.0,925.0 V935.3 M2726.7,915.0 V925.3 M2726.7,932.2 V935.3" stroke="#ffffff" stroke-width="2" />
<rect x="2705.9" y="924.9" width="7" height="4.4" rx="2.2" fill="#ffffff" stroke="none"/>
<rect x="2714.6" y="919.4" width="7" height="4.4" rx="2.2" fill="#ffffff" stroke="none"/>
<rect x="2723.3" y="926.6" width="7" height="4.4" rx="2.2" fill="#ffffff" stroke="none"/>
<path d="M2778.8,915.8 H2799.2 M2786.0,915.8 V912.7 H2792.5 V915.8 M2781.2,916.0 V933 C2781.2,935.5 2782.5,936.5 2784.5,936.5 H2794 C2796.0,936.5 2797.2,935.5 2797.2,933.0 V916" stroke="#ffffff" stroke-width="2" />
<path d="M2785.2,919.5 V932.5 M2789.2,919.5 V932.5 M2793.2,919.5 V932.5" stroke="#ffffff" stroke-width="2" stroke-linecap="butt"/>
<circle cx="2300" cy="925" r="12" stroke="#89d185" stroke-width="2"/>
<path d="M2294.5,925.5 L2298.5,929.5 L2306,921" stroke="#89d185" stroke-width="2" />
<path d="M2563.0,976.0 H2577 L2584.8,983.8 V1001.8 H2563 Z M2577.0,976.0 V983.8 H2584.8" stroke="#ffffff" stroke-width="2" />
<path d="M2570.8,987.4 L2566.3,992.0 L2570.8,996.3 M2576.6,987.4 L2581.0,992.0 L2576.6,996.3" stroke="#ffffff" stroke-width="2" />
<path d="M2634.9,977.0 V1000.1 H2658" stroke="#ffffff" stroke-width="2" stroke-linecap="butt" stroke-linejoin="miter"/>
<path d="M2638.0,995.0 L2645.0,987.9 L2648.6,992.0 L2658.3,982.8" stroke="#ffffff" stroke-width="2" />
<path d="M2709.4,979.0 V987.6 M2709.4,994.6 V999.3 M2718.0,979.0 V982.3 M2718.0,989.0 V999.3 M2726.7,979.0 V989.3 M2726.7,996.2 V999.3" stroke="#ffffff" stroke-width="2" />
<rect x="2705.9" y="988.9" width="7" height="4.4" rx="2.2" fill="#ffffff" stroke="none"/>
<rect x="2714.6" y="983.4" width="7" height="4.4" rx="2.2" fill="#ffffff" stroke="none"/>
<rect x="2723.3" y="990.6" width="7" height="4.4" rx="2.2" fill="#ffffff" stroke="none"/>
<path d="M2778.8,979.8 H2799.2 M2786.0,979.8 V976.7 H2792.5 V979.8 M2781.2,980.0 V997 C2781.2,999.5 2782.5,1000.5 2784.5,1000.5 H2794 C2796.0,1000.5 2797.2,999.5 2797.2,997.0 V980" stroke="#ffffff" stroke-width="2" />
<path d="M2785.2,983.5 V996.5 M2789.2,983.5 V996.5 M2793.2,983.5 V996.5" stroke="#ffffff" stroke-width="2" stroke-linecap="butt"/>
<circle cx="2300" cy="989" r="12" stroke="#89d185" stroke-width="2"/>
<path d="M2294.5,989.5 L2298.5,993.5 L2306,985" stroke="#89d185" stroke-width="2" />
<path d="M26,1614.8 L35.8,1624.2 L26.4,1633.7 M45.7,1606.5 L36.3,1615.6 L45.3,1624.7" stroke="#ffffff" stroke-width="2" stroke-linecap="butt"/>
<path d="M101,1619.5 L90.7,1629.8" stroke="#ffffff" stroke-width="5.6" />
<path d="M101,1619.5 L90.7,1629.8" stroke="#007acc" stroke-width="2" />
<circle cx="105.8" cy="1614.3" r="5.6" stroke="#ffffff" stroke-width="2"/>
<path d="M105.5,1614.5 L112,1608" stroke="#007acc" stroke-width="4.2" stroke-linecap="butt"/>
<path d="M104.5,1612.3 L107.8,1608.6 M107.8,1615.4 L111.5,1612.2" stroke="#ffffff" stroke-width="1.9" />
<path d="M101.8,1624 L107.2,1629.4" stroke="#ffffff" stroke-width="4.6" />
<path d="M101.8,1624 L107.2,1629.4" stroke="#007acc" stroke-width="1.2" />
<path d="M89.2,1610.6 L91.8,1609.8 L95.8,1613.2 L96.2,1617.6 L91.8,1617.2 L88.4,1613.2 Z" stroke="#ffffff" stroke-width="1.8" />
<path d="M152.5,1611 H174 M158.5,1611 V1606.5 H168 V1611 M155,1611.5 V1630 C155,1631.5 156,1632.5 157.5,1632.5 H169 C170.5,1632.5 171.5,1631.5 171.5,1630 V1611.5 M159.5,1615.5 V1629 M163.2,1615.5 V1629 M167,1615.5 V1629" stroke="#ffffff" stroke-width="2" stroke-linecap="butt"/>
<path d="M230,1607 H236 L232,1615 H236.5 L221.5,1632.5 L225.5,1621 H220.5 Z" stroke="#ffffff" stroke-width="1.8" />
<path d="M285,1617 A7,8 0 0 1 299,1617 V1625 A7,8 0 0 1 285,1625 Z M280,1622 H285 M299,1622 H304 M282,1610 L286,1614 M302,1610 L298,1614 M282,1634 L286,1630 M302,1634 L298,1630 M288.5,1618.5 L295.5,1625.5 M295.5,1618.5 L288.5,1625.5" stroke="#ffffff" stroke-width="1.8" />
<circle cx="354.5" cy="1610.3" r="3.5" stroke="#ffffff" stroke-width="2"/>
<circle cx="354.5" cy="1629.7" r="3.5" stroke="#ffffff" stroke-width="2"/>
<circle cx="366.6" cy="1616" r="3.5" stroke="#ffffff" stroke-width="2"/>
<path d="M354.5,1613.8 V1626.2 M354.5,1625 C355.5,1621.5 358,1621 361,1621 C364,1621 366.2,1620.5 366.6,1619.5" stroke="#ffffff" stroke-width="2" />
<path d="M476.5,1618 A11,11 0 0 1 498,1616 M498,1616 L500,1610 M498,1616 L492,1615 M499.5,1622 A11,11 0 0 1 478,1624 M478,1624 L476,1630 M478,1624 L484,1625" stroke="#ffffff" stroke-width="2" />
<path d="M550,1612 V1629 M543.5,1622.5 L550,1629 L556.5,1622.5" stroke="#ffffff" stroke-width="2" />
<path d="M612,1629 V1612 M605.5,1618.5 L612,1612 L618.5,1618.5" stroke="#ffffff" stroke-width="2" />
<circle cx="684" cy="1620" r="12" stroke="#ffffff" stroke-width="2"/>
<path d="M679,1615 L689,1625 M689,1615 L679,1625" stroke="#ffffff" stroke-width="2" />
<path d="M750,1608 L762,1632 H738 Z" stroke="#ffffff" stroke-width="2" />
<path d="M750,1616 V1624" stroke="#ffffff" stroke-width="2.4" />
<circle cx="750" cy="1628" r="1.4" fill="#ffffff" stroke="none"/>
<circle cx="2782" cy="1616" r="4.5" stroke="#ffffff" stroke-width="2"/>
<path d="M2773.5,1633 C2774,1626 2777.5,1623 2782,1623 C2784.5,1623 2786,1624 2787,1625 M2786,1608 H2800 V1620 H2795 L2792,1623 V1620" stroke="#ffffff" stroke-width="2" />
<path d="M2790,1615 L2792.5,1617.5 L2797,1612" stroke="#ffffff" stroke-width="1.8" />
<path d="M2835,1628.5 H2854 C2852,1626.5 2851.5,1624 2851.5,1620 V1617 C2851.5,1611.5 2848,1607.5 2844.5,1607.5 C2841,1607.5 2837.5,1611.5 2837.5,1617 V1620 C2837.5,1624 2837,1626.5 2835,1628.5 Z M2841.5,1631 C2842,1633.5 2847,1633.5 2847.5,1631" stroke="#ffffff" stroke-width="2" />
</svg>
</body></html>
